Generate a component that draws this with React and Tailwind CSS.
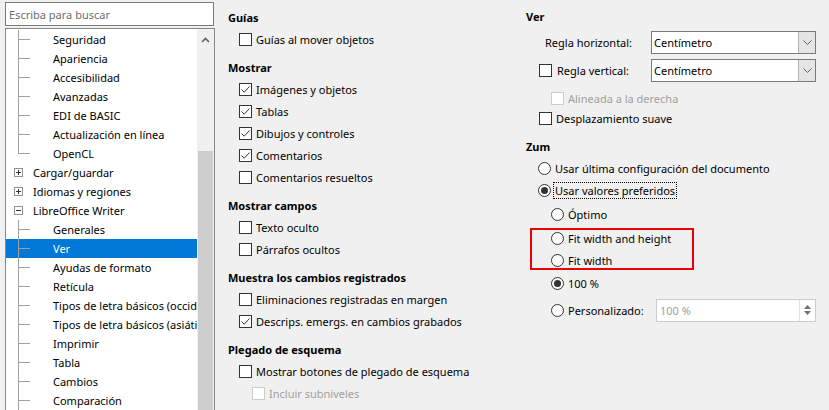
import React from "react";

const tree = [
  { label: "Seguridad", kind: "child" },
  { label: "Apariencia", kind: "child" },
  { label: "Accesibilidad", kind: "child" },
  { label: "Avanzadas", kind: "child" },
  { label: "EDI de BASIC", kind: "child" },
  { label: "Actualización en línea", kind: "child" },
  { label: "OpenCL", kind: "last" },
  { label: "Cargar/guardar", kind: "plus" },
  { label: "Idiomas y regiones", kind: "plus" },
  { label: "LibreOffice Writer", kind: "minus" },
  { label: "Generales", kind: "child" },
  { label: "Ver", kind: "child", selected: true },
  { label: "Ayudas de formato", kind: "child" },
  { label: "Retícula", kind: "child" },
  { label: "Tipos de letra básicos (occidentales)", kind: "child" },
  { label: "Tipos de letra básicos (asiáticos)", kind: "child" },
  { label: "Imprimir", kind: "child" },
  { label: "Tabla", kind: "child" },
  { label: "Cambios", kind: "child" },
  { label: "Comparación", kind: "child" },
];

function Expander({ open }) {
  return (
    <span className="ml-[8px] w-[9px] h-[9px] border border-[#919191] bg-white flex items-center justify-center shrink-0">
      <svg width="7" height="7" viewBox="0 0 7 7">
        <path d="M1 3.5H6" stroke="#333" strokeWidth="1" />
        {!open && <path d="M3.5 1V6" stroke="#333" strokeWidth="1" />}
      </svg>
    </span>
  );
}

function TreeRow({ item }) {
  const sel = item.selected;
  return (
    <div
      className={`h-[19px] flex items-center whitespace-nowrap ${
        sel ? "bg-[#0078d7] text-white" : "text-black"
      }`}
    >
      {item.kind === "plus" || item.kind === "minus" ? (
        <>
          <Expander open={item.kind === "minus"} />
          <span className="ml-[10px]">{item.label}</span>
        </>
      ) : (
        <>
          <div className="ml-[12px] w-[12px] h-full flex flex-col shrink-0">
            <div className="h-1/2 border-l border-b border-[#a0a0a0]" />
            <div
              className={`h-1/2 ${item.kind === "last" ? "" : "border-l border-[#a0a0a0]"}`}
            />
          </div>
          <span className="ml-[23px]">{item.label}</span>
        </>
      )}
    </div>
  );
}

function Box({ checked, disabled }) {
  return (
    <span
      className={`w-[13px] h-[13px] border bg-white flex items-center justify-center shrink-0 ${
        disabled ? "border-[#cccccc]" : "border-[#333333]"
      }`}
    >
      {checked && (
        <svg width="11" height="11" viewBox="0 0 11 11">
          <path d="M1.5 5.5L4.2 8.2L9.5 2.5" fill="none" stroke="#333" strokeWidth="1" />
        </svg>
      )}
    </span>
  );
}

function Radio({ on }) {
  return (
    <span className="w-[13px] h-[13px] rounded-full border border-[#333333] bg-white flex items-center justify-center shrink-0">
      {on && <span className="w-[7px] h-[7px] rounded-full bg-[#333333]" />}
    </span>
  );
}

function Check({ label, checked, disabled, indent = "pl-[11px]", h = "h-[22px]" }) {
  return (
    <div className={`${h} ${indent} flex items-center gap-[4px]`}>
      <Box checked={checked} disabled={disabled} />
      <span className={disabled ? "text-[#a0a0a0]" : "text-black"}>{label}</span>
    </div>
  );
}

function Heading({ children, mt = "" }) {
  return <div className={`h-[21px] flex items-center font-bold ${mt}`}>{children}</div>;
}

function RadioRow({ label, on, indent, h, focus }) {
  return (
    <div className={`${h} ${indent} flex items-center gap-[4px] shrink-0`}>
      <Radio on={on} />
      <span className={focus ? "border border-dotted border-black leading-[15px] px-[1px] -ml-[2px]" : ""}>
        {label}
      </span>
    </div>
  );
}

function Select() {
  return (
    <div className="w-[165px] h-[23px] border border-[#7a7a7a] bg-white flex">
      <span className="flex-1 pl-[2px] flex items-center">Centímetro</span>
      <span className="w-[17px] h-full bg-[#e5e5e5] border-l border-[#b0b0b0] flex items-center justify-center">
        <svg width="9" height="5" viewBox="0 0 9 5">
          <path d="M0.5 0.5L4.5 4.5L8.5 0.5" fill="none" stroke="#606060" strokeWidth="1" />
        </svg>
      </span>
    </div>
  );
}

export default function App() {
  return (
    <div className="w-[829px] h-[410px] overflow-hidden bg-[#f0f0f0] flex text-[11px] font-['Noto_Sans',sans-serif] leading-none">
      {/* left tree */}
      <div className="w-[215px] shrink-0 pl-[5px] pt-[2px] flex flex-col">
        <div className="shrink-0 w-[209px] h-[24px] border border-[#7a7a7a] bg-white flex items-center pl-[3px] text-[#6d6d6d]">
          Escriba para buscar
        </div>
        <div className="shrink-0 mt-[2px] w-[210px] h-[400px] border border-[#828790] bg-white flex">
          <div className="w-[191px] pt-[1px] overflow-hidden">
            {tree.map((t) => (
              <TreeRow key={t.label} item={t} />
            ))}
          </div>
          <div className="w-[17px] bg-[#f0f0f0] flex flex-col items-center">
            <div className="h-[22px] flex items-center justify-center">
              <svg width="9" height="6" viewBox="0 0 9 6">
                <path d="M1 5L4.5 1.5L8 5" fill="none" stroke="#606060" strokeWidth="1.6" />
              </svg>
            </div>
            <div className="mt-[100px] w-[15px] flex-1 bg-[#cdcdcd]" />
          </div>
        </div>
      </div>

      {/* middle column */}
      <div className="w-[311px] shrink-0 pl-[13px] pt-[7px]">
        <Heading>Guías</Heading>
        <Check label="Guías al mover objetos" />
        <Heading mt="mt-[7px]">Mostrar</Heading>
        <Check label="Imágenes y objetos" checked />
        <Check label="Tablas" checked />
        <Check label="Dibujos y controles" checked />
        <Check label="Comentarios" checked />
        <Check label="Comentarios resueltos" />
        <Heading mt="mt-[7px]">Mostrar campos</Heading>
        <Check label="Texto oculto" />
        <Check label="Párrafos ocultos" />
        <Heading mt="mt-[7px]">Muestra los cambios registrados</Heading>
        <Check label="Eliminaciones registradas en margen" />
        <Check label="Descrips. emergs. en cambios grabados" checked />
        <Heading mt="mt-[7px]">Plegado de esquema</Heading>
        <Check label="Mostrar botones de plegado de esquema" />
        <Check label="Incluir subniveles" disabled indent="pl-[24px]" />
      </div>

      {/* right column */}
      <div className="flex-1 pt-[6px]">
        <Heading>Ver</Heading>
        <div className="mt-[1px] h-[28px] flex items-center">
          <span className="w-[125px] pl-[19px]">Regla horizontal:</span>
          <Select />
        </div>
        <div className="h-[28px] flex items-center">
          <div className="w-[125px] pl-[13px] flex items-center gap-[5px]">
            <Box />
            <span>Regla vertical:</span>
          </div>
          <Select />
        </div>
        <Check label="Alineada a la derecha" disabled indent="pl-[25px] mt-[4px]" h="h-[20px]" />
        <Check label="Desplazamiento suave" indent="pl-[13px]" h="h-[20px]" />
        <Heading mt="mt-[8px]">Zum</Heading>
        <RadioRow label="Usar última configuración del documento" indent="pl-[12px]" h="h-[22px]" />
        <RadioRow label="Usar valores preferidos" on focus indent="pl-[12px]" h="h-[22px]" />
        <RadioRow label="Óptimo" indent="pl-[25px]" h="h-[27px]" />
        <div className="ml-[4px] w-[164px] h-[42px] border-2 border-[#ee0000] flex flex-col justify-center">
          <RadioRow label="Fit width and height" indent="pl-[19px]" h="h-[22px]" />
          <RadioRow label="Fit width" indent="pl-[19px]" h="h-[22px]" />
        </div>
        <RadioRow label="100 %" on indent="pl-[25px]" h="h-[26px]" />
        <div className="h-[28px] pl-[25px] flex items-center">
          <Radio />
          <span className="ml-[4px] w-[88px]">Personalizado:</span>
          <div className="w-[160px] h-[23px] border border-[#cccccc] bg-white flex">
            <span className="flex-1 pl-[3px] flex items-center text-[#a0a0a0]">100 %</span>
            <span className="w-[16px] flex flex-col items-center justify-center gap-[2px] border-l border-[#e0e0e0]">
              <svg width="7" height="4" viewBox="0 0 7 4">
                <path d="M0 4L3.5 0L7 4Z" fill="#707070" />
              </svg>
              <svg width="7" height="4" viewBox="0 0 7 4">
                <path d="M0 0L3.5 4L7 0Z" fill="#707070" />
              </svg>
            </span>
          </div>
        </div>
      </div>
    </div>
  );
}
